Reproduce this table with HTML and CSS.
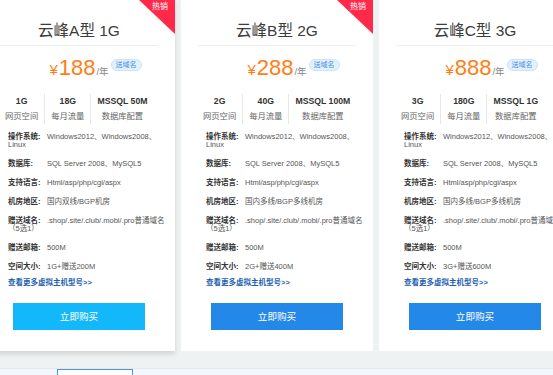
FILE: index.html
```html
<!DOCTYPE html>
<html lang="zh-CN">
<head>
<meta charset="utf-8">
<title>虚拟主机</title>
<link rel="stylesheet" href="styles.css">
</head>
<body>
<div class="plans">
  <div class="card card-active">
    <div class="hot">热销</div>
    <h3 class="title">云峰A型 1G</h3>
    <div class="price"><span class="amt"><span class="yen">¥</span>188<span class="unit">/年</span><span class="tag">送域名</span></span></div>
    <div class="stats">
      <div class="stat"><div class="val">1G</div><div class="lab">网页空间</div></div>
      <div class="stat"><div class="val">18G</div><div class="lab">每月流量</div></div>
      <div class="stat"><div class="val">MSSQL 50M</div><div class="lab">数据库配置</div></div>
    </div>
    <div class="specs">
      <p><b>操作系统:</b>Windows2012、Windows2008、<br>Linux</p>
      <p><b>数据库:</b>SQL Server 2008、MySQL5</p>
      <p><b>支持语言:</b>Html/asp/php/cgi/aspx</p>
      <p><b>机房地区:</b>国内双线/BGP机房</p>
      <p><b>赠送域名:</b>.shop/.site/.club/.mobi/.pro普通域名<br>（5选1）</p>
      <p><b>赠送邮箱:</b>500M</p>
      <p><b>空间大小:</b>1G+赠送200M</p>
    </div>
    <a class="more" href="#">查看更多虚拟主机型号&gt;&gt;</a>
    <a class="buy" href="#">立即购买</a>
  </div>
  <div class="card">
    <div class="hot">热销</div>
    <h3 class="title">云峰B型 2G</h3>
    <div class="price"><span class="amt"><span class="yen">¥</span>288<span class="unit">/年</span><span class="tag">送域名</span></span></div>
    <div class="stats">
      <div class="stat"><div class="val">2G</div><div class="lab">网页空间</div></div>
      <div class="stat"><div class="val">40G</div><div class="lab">每月流量</div></div>
      <div class="stat"><div class="val">MSSQL 100M</div><div class="lab">数据库配置</div></div>
    </div>
    <div class="specs">
      <p><b>操作系统:</b>Windows2012、Windows2008、<br>Linux</p>
      <p><b>数据库:</b>SQL Server 2008、MySQL5</p>
      <p><b>支持语言:</b>Html/asp/php/cgi/aspx</p>
      <p><b>机房地区:</b>国内多线/BGP多线机房</p>
      <p><b>赠送域名:</b>.shop/.site/.club/.mobi/.pro普通域名<br>（5选1）</p>
      <p><b>赠送邮箱:</b>500M</p>
      <p><b>空间大小:</b>2G+赠送400M</p>
    </div>
    <a class="more" href="#">查看更多虚拟主机型号&gt;&gt;</a>
    <a class="buy" href="#">立即购买</a>
  </div>
  <div class="card">
    <h3 class="title">云峰C型 3G</h3>
    <div class="price"><span class="amt"><span class="yen">¥</span>888<span class="unit">/年</span><span class="tag">送域名</span></span></div>
    <div class="stats">
      <div class="stat"><div class="val">3G</div><div class="lab">网页空间</div></div>
      <div class="stat"><div class="val">180G</div><div class="lab">每月流量</div></div>
      <div class="stat"><div class="val">MSSQL 1G</div><div class="lab">数据库配置</div></div>
    </div>
    <div class="specs">
      <p><b>操作系统:</b>Windows2012、Windows2008、<br>Linux</p>
      <p><b>数据库:</b>SQL Server 2008、MySQL5</p>
      <p><b>支持语言:</b>Html/asp/php/cgi/aspx</p>
      <p><b>机房地区:</b>国内多线/BGP多线机房</p>
      <p><b>赠送域名:</b>.shop/.site/.club/.mobi/.pro普通域名<br>（5选1）</p>
      <p><b>赠送邮箱:</b>500M</p>
      <p><b>空间大小:</b>3G+赠送600M</p>
    </div>
    <a class="more" href="#">查看更多虚拟主机型号&gt;&gt;</a>
    <a class="buy" href="#">立即购买</a>
  </div>
</div>
<div class="next">
  <div class="tab"></div>
</div>
</body>
</html>
```
FILE: styles.css
```css
html, body {
  margin: 0;
  padding: 0;
  overflow: hidden;
}
body {
  background: #eef2f3;
  font-family: "Liberation Sans", "Noto Sans CJK SC", sans-serif;
  color: #333;
}
.plans {
  display: flex;
  gap: 6px;
  margin-left: -17px;
  padding-bottom: 17px;
}
.card {
  flex: none;
  width: 192px;
  background: #fff;
  padding: 21px 0 21px;
  position: relative;
  overflow: hidden;
  display: flex;
  flex-direction: column;
}
.card-active {
  box-shadow: 0 3px 5px rgba(0, 0, 0, 0.13);
  overflow: visible;
}
.hot {
  position: absolute;
  top: 0;
  right: 0;
  width: 36px;
  height: 34px;
  background: #ff2a4a;
  clip-path: polygon(0 0, 100% 0, 100% 100%);
  color: #fff;
  font-size: 8px;
  line-height: 10px;
  text-align: right;
  padding: 2px 7px 0 0;
  box-sizing: border-box;
}
.title {
  margin: 0 17px;
  padding-bottom: 4px;
  border-bottom: 1px solid #eeeeee;
  font-size: 15.5px;
  line-height: 20px;
  font-weight: normal;
  text-align: center;
  color: #3c3c3c;
}
.price {
  margin-top: 8px;
  height: 28px;
  line-height: 28px;
  text-align: center;
}
.amt {
  position: relative;
  display: inline-block;
  font-size: 22px;
  color: #ff7e14;
}
.yen {
  font-size: 15px;
  margin-right: 1px;
}
.unit {
  font-size: 9.5px;
  color: #888;
  margin-left: 1px;
}
.tag {
  position: absolute;
  left: 100%;
  top: 5px;
  margin-left: 2px;
  height: 10px;
  line-height: 10px;
  padding: 0 4px;
  font-size: 7px;
  color: #3d8fe4;
  background: #e3f0fd;
  border: 1px solid #cde3f8;
  border-radius: 6px;
  white-space: nowrap;
  box-sizing: content-box;
}
.stats {
  display: flex;
  margin-top: 12px;
  padding-left: 16px;
}
.stat {
  padding: 0 6px;
  text-align: center;
  white-space: nowrap;
}
.stat + .stat {
  border-left: 1px solid #e8e8e8;
}
.val {
  font-size: 8.7px;
  line-height: 14px;
  font-weight: bold;
  color: #333;
}
.lab {
  font-size: 8.3px;
  line-height: 16px;
  color: #666;
}
.specs {
  margin-top: 9px;
  padding: 0 6px 0 25px;
}
.specs p {
  margin: 0 0 11px;
  font-size: 7.5px;
  line-height: 8px;
  color: #555;
  white-space: nowrap;
}
.specs p:last-child {
  margin-bottom: 8px;
}
.specs b {
  display: inline-block;
  width: 39px;
  color: #333;
  font-weight: bold;
}
.more {
  margin-left: 25px;
  font-size: 7.5px;
  line-height: 8px;
  font-weight: bold;
  color: #1f5faf;
  text-decoration: none;
}
.buy {
  margin: 16px 30px 0;
  height: 27px;
  line-height: 27px;
  text-align: center;
  font-size: 9.6px;
  color: #fff;
  background: #2488e8;
  text-decoration: none;
}
.card-active .buy {
  background: #12b8fa;
}
.next {
  border-top: 1px solid #e4e9e7;
  background: #f1f7fd;
  height: 6px;
  overflow: hidden;
  padding-left: 57px;
}
.tab {
  width: 74px;
  height: 30px;
  border: 1px solid #4d94e6;
  background: #fff;
}
```
